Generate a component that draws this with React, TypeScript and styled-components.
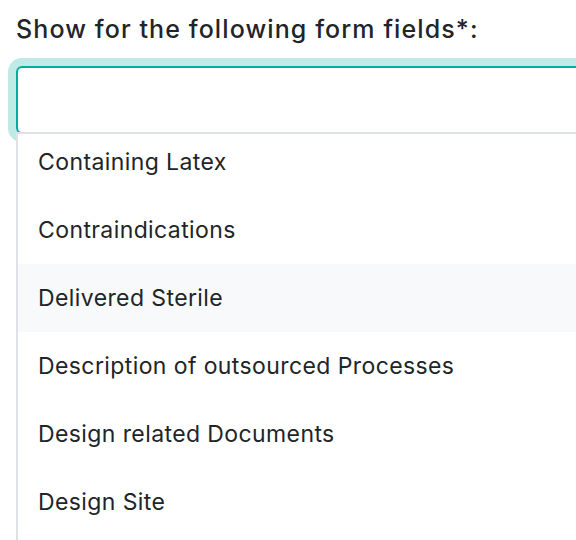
import React from "react";
import styled, { createGlobalStyle } from "styled-components";

const GlobalStyle = createGlobalStyle`
  html, body {
    margin: 0;
    padding: 0;
    overflow: hidden;
    background: #ffffff;
  }
  body {
    font-family: Inter, "Noto Sans", "Liberation Sans", sans-serif;
    color: #212529;
  }
`;

const Page = styled.div`
  width: 576px;
  height: 540px;
  overflow: hidden;
  padding: 11px 0 0 16px;
  box-sizing: border-box;
`;

const Label = styled.div`
  font-size: 25px;
  line-height: 36px;
  font-weight: 500;
  letter-spacing: 1.1px;
  color: #212529;
  margin-bottom: 19px;
  white-space: nowrap;
`;

const Field = styled.div`
  position: relative;
  width: 640px;
`;

const Input = styled.div`
  height: 68px;
  box-sizing: border-box;
  border: 2px solid #00ad9c;
  border-radius: 6px;
  box-shadow: 0 0 0 8px rgba(0, 173, 156, 0.25);
  background: #ffffff;
`;

const Menu = styled.ul`
  position: absolute;
  top: 66px;
  left: 0;
  width: 100%;
  margin: 0;
  padding: 0 0 12px;
  list-style: none;
  background: #ffffff;
  border-top: 2px solid #dee2e6;
  border-left: 2px solid #dee2e6;
  z-index: 2;
`;

const Item = styled.li<{ $active?: boolean }>`
  display: flex;
  align-items: center;
  height: 68px;
  box-sizing: border-box;
  padding: 0 20px;
  font-size: 23px;
  letter-spacing: 0.4px;
  color: #212529;
  white-space: nowrap;
  background: ${(p) => (p.$active ? "#f8f9fa" : "#ffffff")};

  &:first-child {
    height: 62px;
    padding-bottom: 6px;
  }
`;

const options = [
  "Containing Latex",
  "Contraindications",
  "Delivered Sterile",
  "Description of outsourced Processes",
  "Design related Documents",
  "Design Site",
];

export default function App() {
  return (
    <>
      <GlobalStyle />
      <Page>
        <Label>Show for the following form fields*:</Label>
        <Field>
          <Input />
          <Menu>
            {options.map((o) => (
              <Item key={o} $active={o === "Delivered Sterile"}>
                {o}
              </Item>
            ))}
          </Menu>
        </Field>
      </Page>
    </>
  );
}
